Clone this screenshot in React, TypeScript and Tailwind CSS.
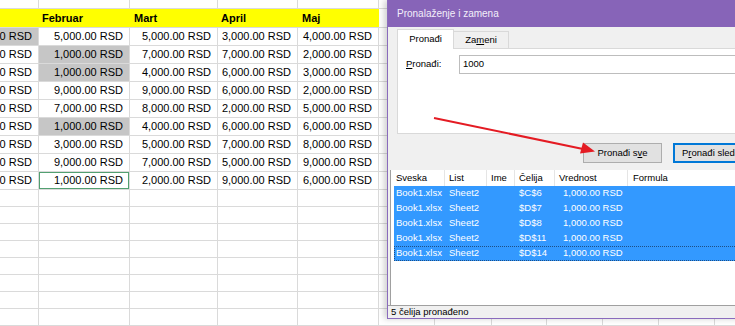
import React from "react";

// Spreadsheet behind a "Find and Replace" dialog (Serbian locale), with a red callout arrow.

const colW = [
  "w-[39px]",
  "w-[91px]",
  "w-[88px]",
  "w-[80px]",
  "w-[81px]",
  "w-[56px]",
  "w-[57px]",
  "w-[55px]",
  "w-[56px]",
  "w-[56px]",
  "w-[56px]",
  "w-[40px]",
];

const headers = ["", "Februar", "Mart", "April", "Maj"];
const headerPad = ["pl-[3px]", "pl-[3px]", "pl-[4px]", "pl-[3px]", "pl-[4px]"];

const rows = [
  ["1,000.00 RSD", "5,000.00 RSD", "5,000.00 RSD", "3,000.00 RSD", "4,000.00 RSD"],
  ["2,000.00 RSD", "1,000.00 RSD", "7,000.00 RSD", "7,000.00 RSD", "2,000.00 RSD"],
  ["3,000.00 RSD", "1,000.00 RSD", "4,000.00 RSD", "6,000.00 RSD", "3,000.00 RSD"],
  ["4,000.00 RSD", "9,000.00 RSD", "9,000.00 RSD", "6,000.00 RSD", "2,000.00 RSD"],
  ["5,000.00 RSD", "7,000.00 RSD", "8,000.00 RSD", "2,000.00 RSD", "5,000.00 RSD"],
  ["6,000.00 RSD", "1,000.00 RSD", "4,000.00 RSD", "6,000.00 RSD", "6,000.00 RSD"],
  ["7,000.00 RSD", "3,000.00 RSD", "5,000.00 RSD", "7,000.00 RSD", "8,000.00 RSD"],
  ["8,000.00 RSD", "9,000.00 RSD", "7,000.00 RSD", "5,000.00 RSD", "9,000.00 RSD"],
  ["2,000.00 RSD", "1,000.00 RSD", "2,000.00 RSD", "9,000.00 RSD", "6,000.00 RSD"],
];

const found = new Set(["0-0", "1-1", "2-1", "5-1"]);
const active = "8-1";

const results = ["$C$6", "$D$7", "$D$8", "$D$11", "$D$14"];

const cellBase = "shrink-0 h-full border-r border-b border-[#dadada] overflow-hidden whitespace-nowrap flex items-center";

function Sheet() {
  return (
    <div className="flex flex-col font-['Liberation_Sans',Arial,sans-serif] text-[11px] text-black">
      {/* partial row above the header */}
      <div className="flex h-[9px]">
        {colW.map((w, i) => (
          <div key={i} className={`${cellBase} ${w}`} />
        ))}
      </div>
      {/* yellow header row */}
      <div className="flex h-[19px]">
        {colW.map((w, i) =>
          i < 5 ? (
            <div key={i} className={`shrink-0 h-full border-b border-[#dadada] bg-[#ffff00] flex items-center font-bold ${w} ${headerPad[i]}`}>
              {headers[i]}
            </div>
          ) : (
            <div key={i} className={`${cellBase} ${w}`} />
          )
        )}
      </div>
      {rows.map((r, ri) => (
        <div key={ri} className="flex h-[18px]">
          {colW.map((w, ci) => {
            const key = `${ri}-${ci}`;
            const bg = found.has(key) ? "bg-[#c6c6c6]" : "";
            const act = key === active ? "shadow-[inset_0_0_0_1px_#52a071]" : "";
            return (
              <div key={ci} className={`${cellBase} ${w} ${bg} ${act} justify-end pr-[6px]`}>
                {ci < 5 ? r[ci] : ""}
              </div>
            );
          })}
        </div>
      ))}
      {Array.from({ length: 8 }).map((_, ri) => (
        <div key={ri} className="flex h-[17px]">
          {colW.map((w, ci) => (
            <div key={ci} className={`${cellBase} ${w}`} />
          ))}
        </div>
      ))}
    </div>
  );
}

function Dialog() {
  return (
    <div className="absolute top-0 left-[387px] w-[360px] h-[319px] flex flex-col border-l border-b border-[#8a6bbd] bg-[#f0f0f0] shadow-[-3px_0_6px_rgba(0,0,0,0.18)] font-['Liberation_Sans',Arial,sans-serif] text-[9.5px] text-black">
      <div className="h-[27px] shrink-0 bg-[#8764b8] flex items-center pl-[9px] text-[10px] text-[#f3effa]">
        Pronalaženje i zamena
      </div>

      {/* tabs */}
      <div className="h-[21px] shrink-0 flex items-end pl-[9px]">
        <div className="relative z-10 -mb-px shrink-0 w-[57px] h-[20px] bg-white border border-b-0 border-[#d9d9d9] flex items-center justify-center">
          Pronađi
        </div>
        <div className="shrink-0 w-[55px] h-[17px] bg-[#f0f0f0] border border-l-0 border-b-0 border-[#d9d9d9] flex items-center justify-center">
          Za<span className="underline">m</span>eni
        </div>
      </div>

      <div className="h-[86px] shrink-0 ml-[9px] bg-white border border-r-0 border-[#d9d9d9]">
        <div className="mt-[6px] flex items-center h-[19px]">
          <div className="shrink-0 w-[61px] pl-[8px]">
            <span className="underline">P</span>ronađi:
          </div>
          <div className="flex-1 h-[19px] bg-white border border-r-0 border-[#bdbdbd] flex items-center pl-[3px]">
            1000
          </div>
        </div>
      </div>

      {/* buttons */}
      <div className="mt-[9px] h-[20px] shrink-0 flex">
        <div className="shrink-0 ml-[195px] w-[79px] h-[20px] bg-[#e1e1e1] border border-[#adadad] flex items-center justify-center">
          Pronađi s<span className="underline">v</span>e
        </div>
        <div className="shrink-0 ml-[11px] w-[92px] h-[20px] bg-[#e1e1e1] border-2 border-[#0078d7] flex items-center pl-[7px] whitespace-nowrap">
          P<span className="underline">r</span>onađi sledeće
        </div>
      </div>

      {/* results list */}
      <div className="mt-[7px] ml-[2px] h-[135px] shrink-0 bg-white border-l border-[#a0a0a0] flex flex-col">
        <div className="h-[16px] shrink-0 flex items-center">
          <div className="shrink-0 w-[54px] h-full pl-[5px] flex items-center border-r border-[#e5e5e5]">Sveska</div>
          <div className="shrink-0 w-[42px] h-full pl-[4px] flex items-center border-r border-[#e5e5e5]">List</div>
          <div className="shrink-0 w-[28px] h-full pl-[4px] flex items-center border-r border-[#e5e5e5]">Ime</div>
          <div className="shrink-0 w-[40px] h-full pl-[4px] flex items-center border-r border-[#e5e5e5]">Čelija</div>
          <div className="shrink-0 w-[73px] h-full pl-[4px] flex items-center border-r border-[#e5e5e5]">Vrednost</div>
          <div className="flex-1 h-full pl-[5px] flex items-center">Formula</div>
        </div>
        <div className="ml-[3px] flex flex-col text-white">
          {results.map((cell, i) => (
            <div
              key={i}
              className={`h-[15px] flex items-center bg-[#3399ff] ${
                i === results.length - 1 ? "outline outline-1 -outline-offset-1 outline-dotted outline-[#1d4f86]" : ""
              }`}
            >
              <div className="shrink-0 w-[51px] pl-[2px]">Book1.xlsx</div>
              <div className="shrink-0 w-[42px] pl-[4px]">Sheet2</div>
              <div className="shrink-0 w-[28px]" />
              <div className="shrink-0 w-[40px] pl-[4px]">{cell}</div>
              <div className="shrink-0 w-[73px] pl-[8px] whitespace-nowrap">1,000.00 RSD</div>
            </div>
          ))}
        </div>
      </div>

      <div className="h-[13px] shrink-0 border-t border-[#a0a0a0] flex items-center pl-[3px]">
        5 čelija pronađeno
      </div>
    </div>
  );
}

export default function App() {
  return (
    <div className="relative w-[735px] h-[326px] overflow-hidden bg-white">
      <Sheet />
      <Dialog />
      <svg className="absolute inset-0 pointer-events-none" width="735" height="326">
        <line x1="434" y1="118" x2="583" y2="149" stroke="#e41b23" strokeWidth="2" />
        <polygon points="595,151.5 580,153.5 583,142.5" fill="#e41b23" />
      </svg>
    </div>
  );
}
